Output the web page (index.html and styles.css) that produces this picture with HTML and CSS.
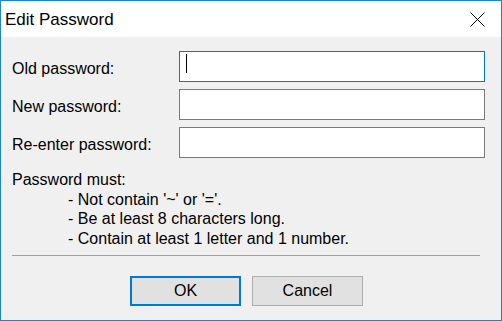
FILE: index.html
```html
<!DOCTYPE html>
<html lang="en">
<head>
  <meta charset="UTF-8">
  <title>Edit Password</title>
  <link rel="stylesheet" href="styles.css">
</head>
<body>
  <div class="window">
    <div class="titlebar">
      <span class="title">Edit Password</span>
      <svg class="close" width="15" height="15" viewBox="0 0 15 15">
        <path d="M0.5 0.5 L14.5 14.5 M14.5 0.5 L0.5 14.5" stroke="#000" stroke-width="1" fill="none"/>
      </svg>
    </div>

    <div class="content">
      <div class="form-grid">
        <label>Old password:</label>
        <div class="field focused"><span class="caret"></span></div>
        <label>New password:</label>
        <div class="field"></div>
        <label>Re-enter password:</label>
        <div class="field"></div>
      </div>

      <div class="rules">
        <div>Password must:</div>
        <div class="rule">- Not contain '~' or '='.</div>
        <div class="rule">- Be at least 8 characters long.</div>
        <div class="rule">- Contain at least 1 letter and 1 number.</div>
      </div>

      <hr class="sep">

      <div class="buttons">
        <button class="btn default">OK</button>
        <button class="btn">Cancel</button>
      </div>
    </div>
  </div>
</body>
</html>
```

FILE: styles.css
```css
* { margin: 0; padding: 0; box-sizing: border-box; }
html, body { width: 502px; height: 321px; overflow: hidden; }
body { font-family: "Liberation Sans", Arial, sans-serif; font-size: 16px; color: #000; background: #f0f0f0; }

.window { width: 502px; height: 321px; border: 1px solid #1883d7; background: #f0f0f0; display: flex; flex-direction: column; }

.titlebar { height: 36px; background: #fff; display: flex; align-items: center; justify-content: space-between; padding: 2px 16px 0 4px; }
.title { font-size: 17px; }
.close { display: block; margin-top: -2px; }

.content { flex: 1; padding: 14px 15px 0 11px; }

.form-grid { display: grid; grid-template-columns: 167px 306px; row-gap: 7px; align-items: center; }
.form-grid label { line-height: 26px; align-self: end; }
.field { height: 31px; background: #fff; border: 1px solid #7a7a7a; padding: 2px 6px; }
.field.focused { border-color: #0078d7; }
.caret { display: block; width: 1px; height: 19px; background: #000; }

.rules { margin-top: 12px; line-height: 19.7px; }
.rule { padding-left: 56px; }

.sep { border: none; border-top: 1px solid #a0a0a0; margin: 6px 5px 0 0; width: 468px; }

.buttons { display: flex; gap: 11px; padding: 20px 0 0 118px; }
.btn { width: 111px; height: 30px; font-family: inherit; font-size: 16px; color: #000; background: #e1e1e1; border: 1px solid #adadad; }
.btn.default { border: 2px solid #0078d7; }
```
